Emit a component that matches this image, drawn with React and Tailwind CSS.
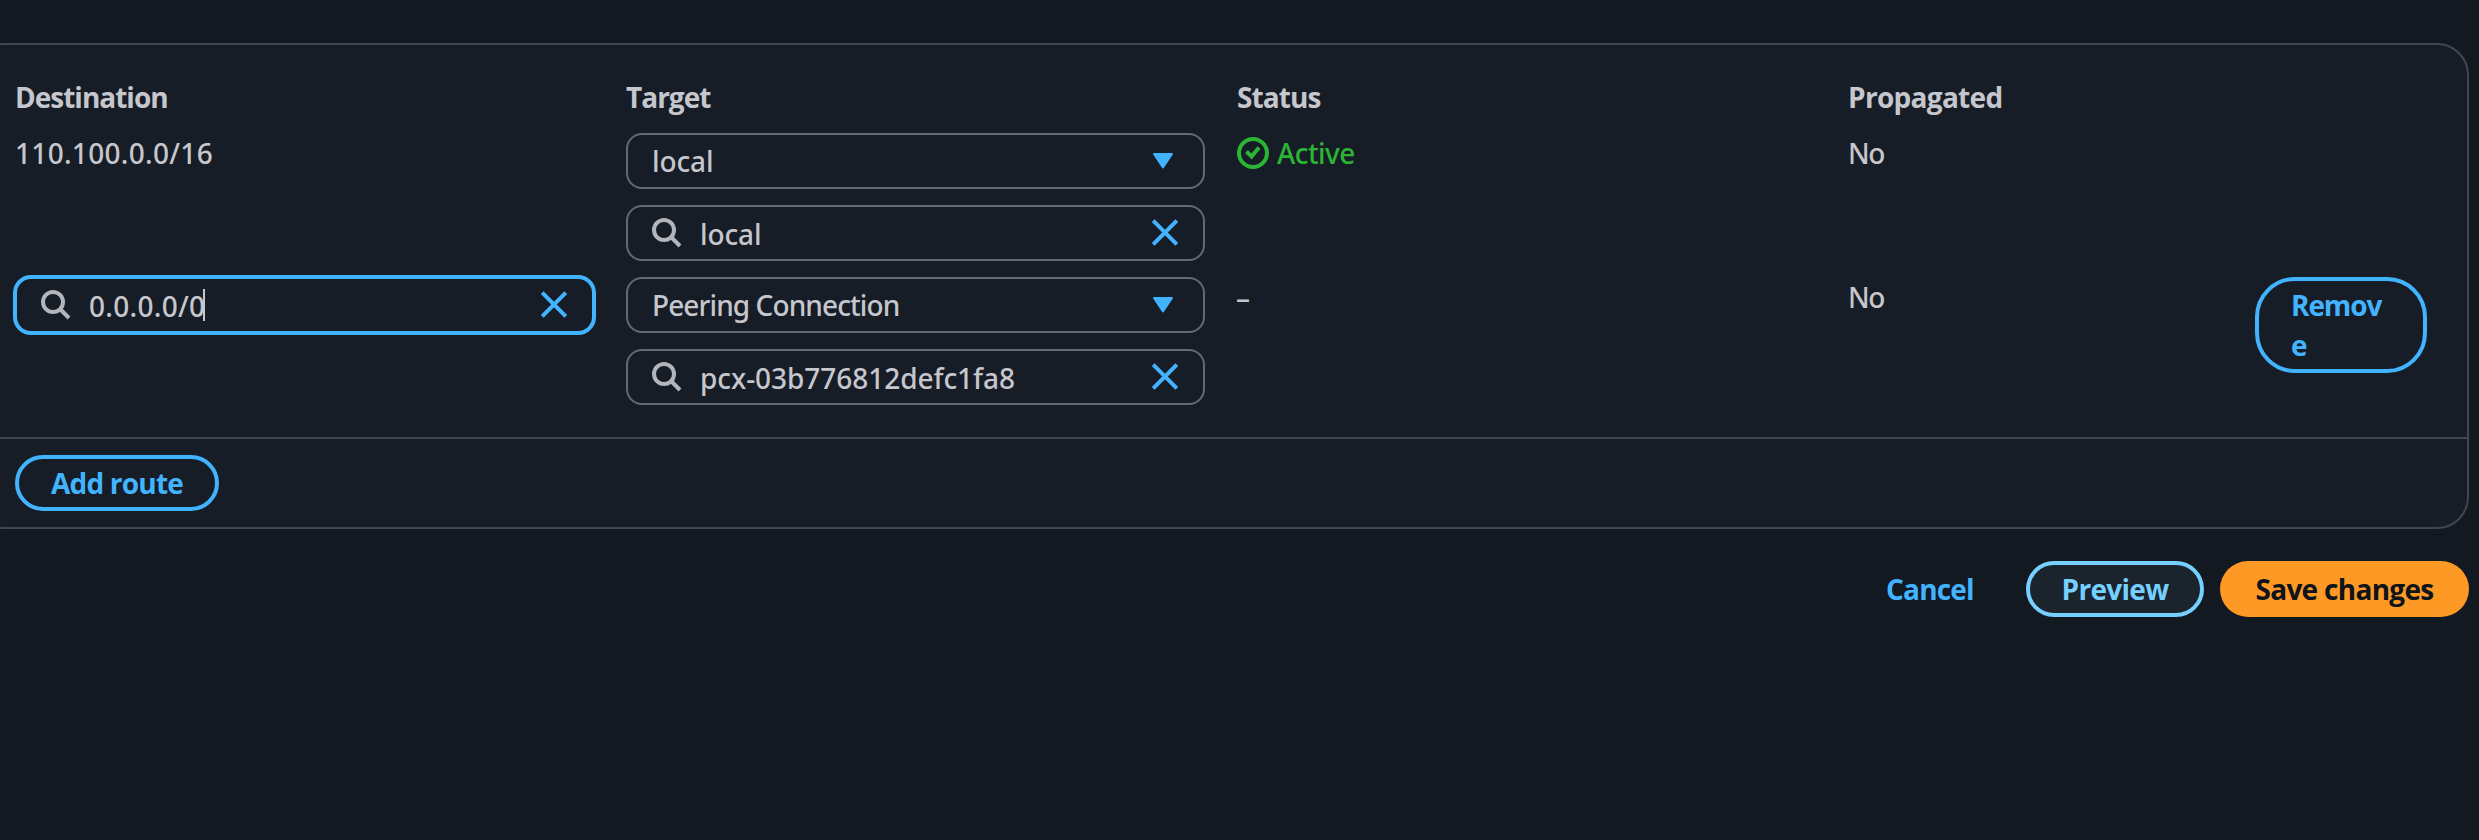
function SearchIcon() {
  return (
    <svg className="h-8 w-8 shrink-0 text-[#b4b4bb]" viewBox="0 0 32 32" fill="none" stroke="currentColor" strokeWidth="4">
      <circle cx="13" cy="13" r="10" />
      <path d="M20 20l9 9" />
    </svg>
  );
}

function CloseIcon() {
  return (
    <svg className="h-8 w-8 shrink-0 text-[#42b4ff]" viewBox="0 0 32 32" fill="none" stroke="currentColor" strokeWidth="4">
      <path d="M4.200 3.700l23.600 23.600M27.800 3.700L4.200 27.300" />
    </svg>
  );
}

function CaretDown() {
  return (
    <svg className="h-8 w-8 shrink-0 text-[#42b4ff]" viewBox="0 0 32 32" fill="currentColor" stroke="currentColor" strokeWidth="2" strokeLinejoin="round">
      <path d="M7 9h18l-9 13.500z" />
    </svg>
  );
}

function CheckCircle() {
  return (
    <svg className="h-8 w-8 shrink-0" viewBox="0 0 32 32" fill="none" stroke="currentColor" strokeWidth="4">
      <circle cx="16" cy="16" r="14" />
      <path d="M9.500 14.500l5 5 7.500-9" />
    </svg>
  );
}

function Select({ children, className = "" }) {
  return (
    <div className="flex h-14 items-center justify-between rounded-2xl border-2 border-[#656871] pr-6 pl-6">
      <span className={className}>{children}</span>
      <CaretDown />
    </div>
  );
}

function Search({ children, className = "" }) {
  return (
    <div className="flex h-14 items-center rounded-2xl border-2 border-[#656871] pr-[22px] pl-[23px]">
      <SearchIcon />
      <span className={`ml-[17px] flex-1 pt-px ${className}`}>{children}</span>
      <CloseIcon />
    </div>
  );
}

const columns = "grid grid-cols-[611px_611px_611px_407px_172px]";
const button = "border-4 border-[#42b4ff] font-bold text-[#42b4ff]";

export default function App() {
  return (
    <div className="h-[840px] w-[2479px] overflow-hidden bg-[#121920] pt-[43px] font-['Noto_Sans','Open_Sans',sans-serif] text-[28px] leading-[40px] font-medium text-[#c6c6cd]">
      <section className="-ml-7 flex h-[486px] w-[2497px] flex-col rounded-[32px] border-2 border-[#424650] bg-[#161d26]">
        <div className="h-[392px] pt-8 pl-[41px]">
          <div className={`${columns} h-14 font-['Open_Sans',sans-serif] font-bold`}>
            <div className="tracking-[-1px]">Destination</div>
            <div className="tracking-[-1px]">Target</div>
            <div className="tracking-[-0.9px]">Status</div>
            <div className="tracking-[-0.7px]">Propagated</div>
          </div>

          <div className={`${columns} h-36`}>
            <div className="tracking-[0.3px]">110.100.0.0/16</div>
            <div className="flex w-[579px] flex-col gap-4">
              <Select className="tracking-[-0.1px]">local</Select>
              <Search className="tracking-[-0.1px]">local</Search>
            </div>
            <div className="flex h-10 items-center gap-2 text-[#2bb534]">
              <CheckCircle />
              <span className="tracking-[-0.6px]">Active</span>
            </div>
            <div className="tracking-[-1.5px]">No</div>
          </div>

          <div className={`${columns} h-32`}>
            <div className="-mt-0.5 -ml-0.5 flex h-[60px] w-[583px] items-center rounded-[18px] border-4 border-[#42b4ff] pr-[22px] pl-[23px]">
              <SearchIcon />
              <span className="ml-[17px] pt-px tracking-[0.3px]">0.0.0.0/0</span>
              <span className="-ml-0.5 h-8 w-0.5 bg-[#c6c6cd]" />
              <span className="flex-1" />
              <CloseIcon />
            </div>
            <div className="flex w-[579px] flex-col gap-4">
              <Select className="tracking-[-0.9px]">Peering Connection</Select>
              <Search className="tracking-[-0.05px]">pcx-03b776812defc1fa8</Search>
            </div>
            <div className="-ml-px pt-px">–</div>
            <div className="tracking-[-1.5px]">No</div>
            <button className={`${button} h-24 w-[172px] rounded-[40px] pr-8 pl-8 text-left font-['Open_Sans',sans-serif] tracking-[-1.1px]`}>
              Remov
              <br />e
            </button>
          </div>
        </div>

        <div className="flex-1 border-t-2 border-[#424650] pt-4 pl-[41px]">
          <button className={`${button} block h-14 w-[204px] rounded-[40px] font-['Open_Sans',sans-serif] leading-[48px] tracking-[-0.8px]`}>
            Add route
          </button>
        </div>
      </section>

      <div className="mt-8 flex w-[2469px] justify-end gap-4 font-['Open_Sans',sans-serif] leading-[48px] font-bold">
        <button className="h-14 w-[158px] text-left pl-[34px] mr-0 text-[#42b4ff] tracking-[-0.8px]">Cancel</button>
        <button className="h-14 w-[178px] rounded-[40px] border-4 border-[#75cfff] bg-[#1b232d] tracking-[-0.7px] text-[#75cfff]">Preview</button>
        <button className="h-14 w-[249px] rounded-[40px] bg-[#ff9926] text-[#0f141a] tracking-[-0.7px]">Save changes</button>
      </div>
    </div>
  );
}
